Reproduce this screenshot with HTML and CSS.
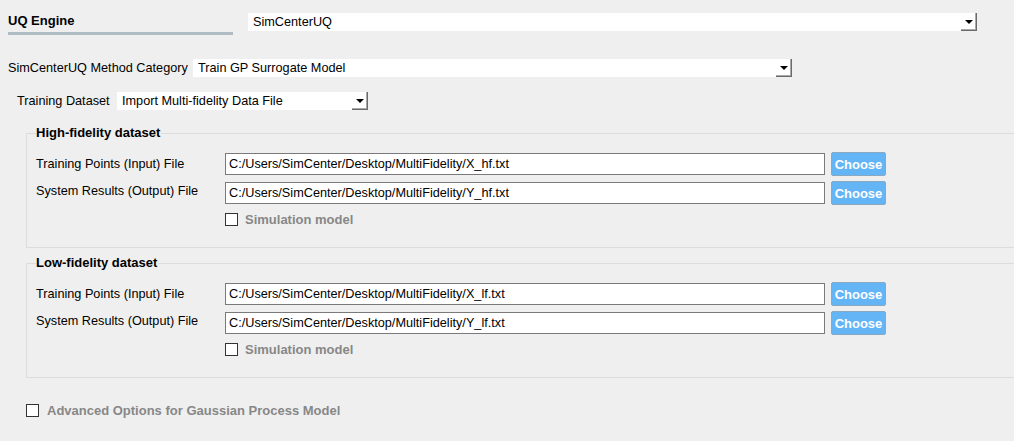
FILE: index.html
```html
<!DOCTYPE html>
<html>
<head>
<meta charset="utf-8">
<link rel="stylesheet" href="styles.css">
</head>
<body>
<div class="page">
  <div class="engine-row">
    <div class="engine-head">
      <div class="engine-title">UQ Engine</div>
      <div class="engine-bar"></div>
    </div>
    <div class="combo combo-engine"><span class="combo-text">SimCenterUQ</span><span class="combo-btn"><span class="tri"></span></span></div>
  </div>

  <div class="row method-row">
    <span class="label">SimCenterUQ Method Category</span>
    <div class="combo combo-method"><span class="combo-text">Train GP Surrogate Model</span><span class="combo-btn"><span class="tri"></span></span></div>
  </div>

  <div class="row dataset-row">
    <span class="label">Training Dataset</span>
    <div class="combo combo-dataset"><span class="combo-text">Import Multi-fidelity Data File</span><span class="combo-btn"><span class="tri"></span></span></div>
  </div>

  <fieldset class="group group-high">
    <legend class="group-title">High-fidelity dataset</legend>
    <div class="file-row">
      <span class="file-label">Training Points (Input) File</span>
      <div class="file-input">C:/Users/SimCenter/Desktop/MultiFidelity/X_hf.txt</div>
      <button class="choose">Choose</button>
    </div>
    <div class="file-row">
      <span class="file-label up">System Results (Output) File</span>
      <div class="file-input">C:/Users/SimCenter/Desktop/MultiFidelity/Y_hf.txt</div>
      <button class="choose">Choose</button>
    </div>
    <div class="check-row">
      <span class="checkbox"></span><span class="check-label">Simulation model</span>
    </div>
  </fieldset>

  <fieldset class="group group-low">
    <legend class="group-title">Low-fidelity dataset</legend>
    <div class="file-row">
      <span class="file-label">Training Points (Input) File</span>
      <div class="file-input">C:/Users/SimCenter/Desktop/MultiFidelity/X_lf.txt</div>
      <button class="choose">Choose</button>
    </div>
    <div class="file-row">
      <span class="file-label up">System Results (Output) File</span>
      <div class="file-input">C:/Users/SimCenter/Desktop/MultiFidelity/Y_lf.txt</div>
      <button class="choose">Choose</button>
    </div>
    <div class="check-row">
      <span class="checkbox"></span><span class="check-label">Simulation model</span>
    </div>
  </fieldset>

  <div class="advanced-row">
    <span class="checkbox"></span><span class="check-label">Advanced Options for Gaussian Process Model</span>
  </div>
</div>
</body>
</html>
```

FILE: styles.css
```css
html, body {
  margin: 0;
  padding: 0;
  background: #efefef;
  overflow: hidden;
}
body {
  font-family: "Liberation Sans", Arial, sans-serif;
  font-size: 12.7px;
  color: #000;
}
.page {
  width: 1014px;
  height: 441px;
  padding: 0 0 0 8px;
  box-sizing: border-box;
  overflow: hidden;
}

/* engine row */
.engine-row {
  display: flex;
  align-items: flex-start;
  padding-top: 13px;
  height: 46px;
}
.engine-head {
  width: 225px;
  display: flex;
  flex-direction: column;
}
.engine-title {
  font-weight: bold;
  font-size: 13px;
  line-height: 16px;
  height: 19px;
}
.engine-bar {
  height: 3px;
  background: #b0bcc4;
}
.combo {
  display: flex;
  align-items: stretch;
  background: #fff;
  height: 18px;
  box-sizing: border-box;
}
.combo-text {
  flex: 1;
  padding-left: 5px;
  line-height: 18px;
  white-space: nowrap;
}
.combo-btn {
  width: 16px;
  box-sizing: border-box;
  border-right: 1px solid #6a6a6a;
  border-bottom: 1px solid #6a6a6a;
  box-shadow: inset -1px -1px 0 #a9a9a9;
  display: flex;
  align-items: center;
  justify-content: center;
  background: #fff;
}
.tri {
  width: 0;
  height: 0;
  border-left: 4px solid transparent;
  border-right: 4px solid transparent;
  border-top: 4px solid #000;
  margin-top: 1px;
}
.combo-engine {
  margin-left: 15px;
  width: 729px;
}

.row {
  display: flex;
  align-items: center;
}
.method-row {
  height: 18px;
}
.method-row .label {
  width: 185px;
}
.combo-method {
  width: 599px;
}
.dataset-row {
  margin-top: 15px;
  padding-left: 9px;
  height: 18px;
}
.dataset-row .label {
  width: 100px;
}
.combo-dataset {
  width: 251px;
}

/* group boxes */
.group {
  border: 1px solid #dcdcdc;
  margin: 0 -20px 0 18px;
  padding: 11px 0 0 9px;
  min-width: 0;
  height: 123px;
  box-sizing: border-box;
}
.group-high {
  margin-top: 15px;
}
.group-low {
  margin-top: 7px;
}
.group-title {
  font-weight: bold;
  font-size: 13px;
  padding: 0 1px 0 0;
  margin-left: 0;
  line-height: 16px;
}
.file-row {
  display: flex;
  align-items: center;
  height: 24px;
  margin-bottom: 5px;
}
.file-label {
  width: 189px;
  white-space: nowrap;
}
.file-label.up {
  position: relative;
  top: -2px;
}
.file-input {
  width: 600px;
  height: 22px;
  box-sizing: border-box;
  border: 1px solid #7a7a7a;
  background: #fff;
  line-height: 20px;
  padding-left: 3px;
  white-space: nowrap;
}
.choose {
  margin-left: 6px;
  width: 55px;
  height: 24px;
  box-sizing: border-box;
  background: #64b5f6;
  border: 1px solid #8aa8c0;
  border-radius: 2px;
  color: #fff;
  font-family: "Liberation Sans", Arial, sans-serif;
  font-weight: bold;
  font-size: 13px;
  padding: 0;
}
.check-row {
  display: flex;
  align-items: center;
  padding-left: 189px;
  height: 18px;
  margin-top: 3px;
}
.checkbox {
  width: 13px;
  height: 13px;
  box-sizing: border-box;
  border: 1px solid #333;
  background: #fff;
  flex: none;
}
.check-label {
  margin-left: 7px;
  font-weight: bold;
  font-size: 13px;
  color: #878787;
}
.advanced-row {
  display: flex;
  align-items: center;
  margin: 23px 0 0 18px;
  height: 18px;
}
.advanced-row .check-label {
  margin-left: 8px;
}
```
